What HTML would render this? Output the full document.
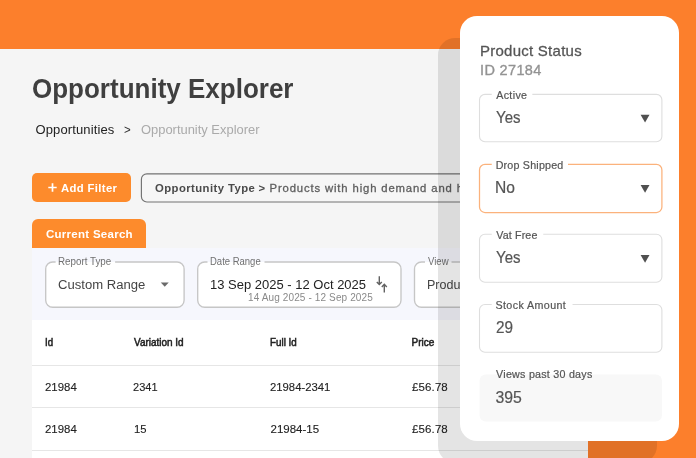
<!DOCTYPE html>
<html>
<head>
<meta charset="utf-8">
<title>Opportunity Explorer</title>
<style>
*{box-sizing:border-box;margin:0;padding:0}
html,body{width:696px;height:458px;overflow:hidden}
body{background:#fc7f2c;font-family:"Liberation Sans",sans-serif;position:relative;color:#333}
.abs{position:absolute}
.t{position:absolute;white-space:nowrap;line-height:1;transform-origin:0 0}
#w{position:absolute;left:0;top:0;width:696px;height:458px;overflow:hidden;will-change:transform}
#panel{left:0;top:49px;width:588px;height:409px;background:#f5f5f5}
#addbtn{left:32px;top:173.3px;width:99.1px;height:28.9px;border-radius:5px;background:#fd8b2c}
#tab{left:32px;top:219px;width:113.75px;height:30px;border-radius:6px 6px 0 0;background:#fd8b2c}
#fbar{left:32px;top:248px;width:556px;height:72px;background:#f6f7fd}
#table{left:32px;top:320px;width:556px;height:138px;background:#fff}
.hl{position:absolute;left:32px;width:556px;height:1px;background:#e6e6e6}
#shadow{left:438px;top:38.2px;width:219.2px;height:425px;border-radius:17px;background:rgba(0,0,0,.105)}
#card{left:460px;top:15.8px;width:219.2px;height:424.9px;border-radius:17px;background:#fff}
</style>
</head>
<body>
<div id="w">
<div class="abs" id="panel"></div>
<div class="t" style="left:31.75px;top:76px;font-size:27px;transform:scaleX(0.963);font-weight:bold;color:#3f3f3f">Opportunity Explorer</div>
<div class="t" style="left:35.5px;top:123px;font-size:13px;letter-spacing:0.125px;color:#222">Opportunities</div>
<div class="t" style="left:123.75px;top:124px;font-size:12px;transform:scaleX(0.9583);color:#333">&gt;</div>
<div class="t" style="left:140.5px;top:123px;font-size:13px;transform:scaleX(0.9937);color:#aaa">Opportunity Explorer</div>

<div class="abs" id="addbtn"></div>
<svg class="abs" style="left:47px;top:182px" width="11" height="11" viewBox="0 0 11 11"><path d="M5.5 1.300v8.400M1.300 5.500h8.400" stroke="#fff" stroke-width="1.700" fill="none"/></svg>
<div class="t" style="left:61.0px;top:183px;font-size:11.3px;letter-spacing:0.361px;font-weight:bold;color:#fff">Add Filter</div>
<svg class="abs" style="left:0;top:0" width="696" height="458" viewBox="0 0 696 458"><rect x="141.400" y="173.800" width="470" height="28.200" rx="5.500" fill="#f6f6f6" stroke="#727272" stroke-width="1.150"/></svg>
<div class="t" style="left:155.0px;top:183px;font-size:11.3px;letter-spacing:0.433px;font-weight:bold;color:#4a4a4a">Opportunity Type</div>
<div class="t" style="left:258.5px;top:183px;font-size:11.3px;font-weight:bold;color:#4a4a4a">&gt;</div>
<div class="t" style="left:269.55px;top:183px;font-size:11.3px;letter-spacing:0.857px;color:#5e5e5e;-webkit-text-stroke:.3px #5e5e5e">Products with high demand and high margin</div>

<div class="abs" id="tab"></div>
<div class="t" style="left:46.0px;top:229px;font-size:11.5px;letter-spacing:0.269px;font-weight:bold;color:#fff">Current Search</div>
<div class="abs" id="fbar"></div>

<svg class="abs" style="left:0;top:0" width="696" height="458" viewBox="0 0 696 458">
<g fill="#fff" stroke="#c6c6c6" stroke-width="1.350">
<rect x="45.7" y="262" width="138.400" height="45.200" rx="7"/>
<rect x="197.700" y="262" width="203.300" height="45.200" rx="7"/>
<rect x="414.500" y="262" width="180" height="45.200" rx="7"/>
</g>
<g fill="#f6f7fd">
<rect x="55.600" y="260.500" width="59.500" height="1.500"/>
<rect x="207.500" y="260.500" width="57" height="1.500"/>
<rect x="425" y="260.500" width="26.500" height="1.500"/>
</g>
<g fill="#fff">
<rect x="55.600" y="262" width="59.500" height="2"/>
<rect x="207.500" y="262" width="57" height="2"/>
<rect x="425" y="262" width="26.500" height="2"/>
</g>
<path d="M160.750 282.600h8l-4 4.200z" fill="#6a6a6a"/>
<path d="M379.300 276.300v7.900M376.800 282l2.500 2.600 2.500-2.600M384.300 292.500v-7.900M381.800 286.900l2.500-2.600 2.500 2.600" stroke="#626262" stroke-width="1.400" fill="none"/>
</svg>
<div class="t" style="left:57.5px;top:256px;font-size:10.5px;transform:scaleX(0.9327);color:#707070">Report Type</div>
<div class="t" style="left:57.5px;top:278px;font-size:13.7px;transform:scaleX(0.9556);color:#444">Custom Range</div>
<div class="t" style="left:209.75px;top:256px;font-size:10.5px;transform:scaleX(0.9041);color:#707070">Date Range</div>
<div class="t" style="left:209.5px;top:278px;font-size:13.7px;transform:scaleX(0.9493);color:#222">13 Sep 2025 - 12 Oct 2025</div>
<div class="t" style="left:248.0px;top:293px;font-size:10px;letter-spacing:0.125px;color:#8a8a8a">14 Aug 2025 - 12 Sep 2025</div>
<div class="t" style="left:427.7px;top:256px;font-size:10.5px;transform:scaleX(0.9102);color:#707070">View</div>
<div class="t" style="left:426.7px;top:278px;font-size:13.7px;transform:scaleX(0.9137);color:#444">Products</div>

<div class="abs" id="table"></div>
<div class="hl" style="top:364.600px"></div>
<div class="hl" style="top:407.300px"></div>
<div class="hl" style="top:449.900px"></div>
<div class="t" style="left:44.75px;top:338px;font-size:10px;transform:scaleX(0.9667);color:#222;-webkit-text-stroke:.5px #222">Id</div><div class="t" style="left:133.5px;top:338px;font-size:10px;transform:scaleX(0.995);color:#222;-webkit-text-stroke:.5px #222">Variation Id</div><div class="t" style="left:269.75px;top:338px;font-size:10px;transform:scaleX(0.9812);color:#222;-webkit-text-stroke:.5px #222">Full Id</div><div class="t" style="left:411.6px;top:338px;font-size:10px;color:#222;-webkit-text-stroke:.5px #222">Price</div>
<div class="t" style="left:44.75px;top:382px;font-size:11.5px;transform:scaleX(0.992);color:#222;-webkit-text-stroke:.12px #222">21984</div><div class="t" style="left:132.5px;top:382px;font-size:11.5px;transform:scaleX(0.9596);color:#222;-webkit-text-stroke:.12px #222">2341</div><div class="t" style="left:269.75px;top:382px;font-size:11.5px;transform:scaleX(0.9835);color:#222;-webkit-text-stroke:.12px #222">21984-2341</div><div class="t" style="left:412.1px;top:382px;font-size:11.5px;letter-spacing:0.1px;color:#222;-webkit-text-stroke:.12px #222">£56.78</div>
<div class="t" style="left:44.75px;top:424px;font-size:11.5px;transform:scaleX(0.992);color:#222;-webkit-text-stroke:.12px #222">21984</div><div class="t" style="left:133.55px;top:424px;font-size:11.5px;transform:scaleX(0.9789);color:#222;-webkit-text-stroke:.12px #222">15</div><div class="t" style="left:270.5px;top:424px;font-size:11.5px;color:#222;-webkit-text-stroke:.12px #222">21984-15</div><div class="t" style="left:412.1px;top:424px;font-size:11.5px;letter-spacing:0.1px;color:#222;-webkit-text-stroke:.12px #222">£56.78</div>

<div class="abs" id="shadow"></div>
<div class="abs" id="card"></div>
<div class="t" style="left:480.0px;top:43px;font-size:15px;letter-spacing:0.25px;color:#555;-webkit-text-stroke:.28px #555">Product Status</div>
<div class="t" style="left:480.0px;top:63px;font-size:14.5px;letter-spacing:0.357px;color:#939393;-webkit-text-stroke:.35px #939393">ID 27184</div>

<svg class="abs" style="left:0;top:0" width="696" height="458" viewBox="0 0 696 458">
<rect x="479.600" y="374.600" width="182.300" height="47" rx="6" fill="#f8f8f8"/>
<g fill="none" stroke="#dedede" stroke-width="1.1">
<rect x="479.500" y="94.400" width="182.400" height="47.400" rx="5.500"/>
<rect x="479.500" y="164.400" width="182.400" height="48.100" rx="5.500" stroke="#fbb27c" stroke-width="1.250"/>
<rect x="479.500" y="234.300" width="182.400" height="47.900" rx="5.500"/>
<rect x="479.500" y="304.500" width="182.400" height="47.700" rx="5.500"/>
</g>
<g fill="#fff">
<rect x="491.750" y="92.500" width="40.600" height="4"/>
<rect x="491.750" y="162.500" width="76.250" height="4"/>
<rect x="491.750" y="232.500" width="51.500" height="4"/>
<rect x="491.750" y="302.500" width="80.800" height="4"/>
</g>
<g fill="#505050">
<path d="M640.600 114.800h8.900l-4.450 7.800z"/>
<path d="M640.600 184.900h8.900l-4.450 7.800z"/>
<path d="M640.600 254.900h8.900l-4.450 7.800z"/>
</g>
</svg>
<div class="t" style="left:496.2px;top:90px;font-size:10.7px;letter-spacing:0.35px;color:#555;-webkit-text-stroke:.2px #555">Active</div><div class="t" style="left:495.5px;top:110px;font-size:15.8px;transform:scaleX(0.9496);color:#555;-webkit-text-stroke:.2px #555">Yes</div>
<div class="t" style="left:495.7px;top:160px;font-size:10.7px;letter-spacing:0.205px;color:#555;-webkit-text-stroke:.2px #555">Drop Shipped</div><div class="t" style="left:494.75px;top:180px;font-size:15.8px;transform:scaleX(0.9868);color:#555;-webkit-text-stroke:.2px #555">No</div>
<div class="t" style="left:496.2px;top:230px;font-size:10.7px;letter-spacing:0.143px;color:#555;-webkit-text-stroke:.2px #555">Vat Free</div><div class="t" style="left:495.5px;top:250px;font-size:15.8px;transform:scaleX(0.9496);color:#555;-webkit-text-stroke:.2px #555">Yes</div>
<div class="t" style="left:495.4px;top:300px;font-size:10.7px;letter-spacing:0.409px;color:#555;-webkit-text-stroke:.2px #555">Stock Amount</div><div class="t" style="left:495.7px;top:320px;font-size:15.8px;transform:scaleX(0.9697);color:#555;-webkit-text-stroke:.2px #555">29</div>
<div class="t" style="left:496.1px;top:369px;font-size:10.7px;letter-spacing:0.25px;color:#555;-webkit-text-stroke:.2px #555">Views past 30 days</div><div class="t" style="left:495.6px;top:390px;font-size:15.8px;letter-spacing:-0.125px;color:#555;-webkit-text-stroke:.2px #555">395</div>
</div>
</body>
</html>
